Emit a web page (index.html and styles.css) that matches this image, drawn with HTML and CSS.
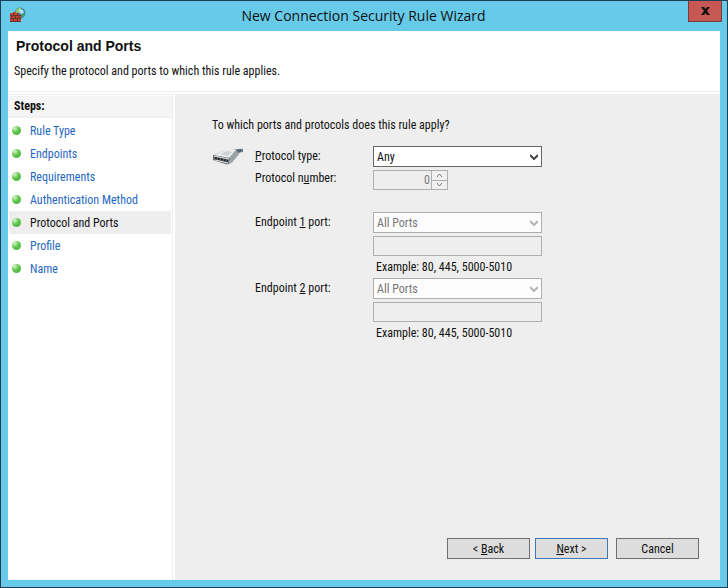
FILE: index.html
```html
<!DOCTYPE html>
<html lang="en">
<head>
<meta charset="utf-8">
<title>New Connection Security Rule Wizard</title>
<link rel="stylesheet" href="styles.css">
</head>
<body>
<div class="window">
  <div class="titlebar">
    <svg class="app-icon" viewBox="0 0 16 16" aria-hidden="true">
      <circle cx="10" cy="6" r="5.500" fill="#3f86b8"/>
      <path d="M6 3Q8 0 11 1L12 3 9 5 8 7 5 6Z" fill="#8cc66b"/>
      <path d="M9 2l4 1 1 3-3 1-2-2z" fill="#b5e2f2"/>
      <path d="M12 7l3-1-1 3-2 2z" fill="#4e9c58"/>
      <path d="M0 6h3v-1h3v1h3v2h2v7H0z" fill="#c3452f"/>
      <path d="M0 8.500h11M0 11.500h11M0 14.500h11M3.500 6v2M7.500 6v2M2 9v2M5.500 9v2M9 9v2M3.500 12v2M7.500 12v2" stroke="#6b352b" fill="none"/>
    </svg>
    <h1 class="title">New Connection Security Rule Wizard</h1>
    <button class="close" type="button" aria-label="Close">
      <svg viewBox="0 0 9 8" aria-hidden="true"><path d="M0 0h3l1.500 2L6 0h3L6 4l3 4H6L4.500 6 3 8H0l3-4z" fill="#111"/></svg>
    </button>
  </div>
  <div class="client">
    <header class="header">
      <h2>Protocol and Ports</h2>
      <p>Specify the protocol and ports to which this rule applies.</p>
    </header>
    <div class="body">
      <nav class="sidebar">
        <h3>Steps:</h3>
        <ul class="steps">
          <li><a href="#">Rule Type</a></li>
          <li><a href="#">Endpoints</a></li>
          <li><a href="#">Requirements</a></li>
          <li><a href="#">Authentication Method</a></li>
          <li class="current"><a href="#">Protocol and Ports</a></li>
          <li><a href="#">Profile</a></li>
          <li><a href="#">Name</a></li>
        </ul>
      </nav>
      <main class="page">
        <p class="question">To which ports and protocols does this rule apply?</p>
        <div class="form">
          <svg class="plug" viewBox="0 0 32 20" aria-hidden="true">
            <path d="M18 6Q24 2 31 3V6Q27 6 23 10z" fill="#71808a"/>
            <path d="M22 5l8-1M24 7l5-2" stroke="#4b5860" fill="none"/>
            <path d="M1 9L14 4 24 4 27 8 20 17 15 19 1 14z" fill="#b4babd"/>
            <path d="M2 9L14 4 24 4 17 12z" fill="#eceeef"/>
            <path d="M8 8l8-3 5 1-6 4z" fill="#cdd2d4"/>
            <path d="M17 12l7-8 3 4-8 9z" fill="#9ba2a6"/>
            <path d="M1 9l17 3-1 6-3 0-13-4z" fill="#6b7073"/>
            <path d="M2 10l15 3M3 14l13 3" stroke="#e2e3e3" fill="none"/>
            <path d="M3 12l13 3" stroke="#222527" stroke-width="2" stroke-dasharray="2 1" fill="none"/>
          </svg>
          <label for="type"><u>P</u>rotocol type:</label>
          <div class="combo">
            <select id="type"><option>Any</option></select>
            <svg viewBox="0 0 8 6" aria-hidden="true"><path d="M0 1l4 4 4-4"/></svg>
          </div>
          <label class="tight" for="number">Protocol n<u>u</u>mber:</label>
          <div class="spinner">
            <input id="number" type="text" value="0" disabled>
            <div class="arrows">
              <button type="button" disabled aria-label="Increase"><svg viewBox="0 0 7 4"><path d="M1 4l2.500-3L6 4"/></svg></button>
              <button type="button" disabled aria-label="Decrease"><svg viewBox="0 0 7 4"><path d="M1 0l2.500 3L6 0"/></svg></button>
            </div>
          </div>
          <label class="group" for="port1">Endpoint <u>1</u> port:</label>
          <div class="combo group">
            <select id="port1" disabled><option>All Ports</option></select>
            <svg viewBox="0 0 8 6" aria-hidden="true"><path d="M0 1l4 4 4-4"/></svg>
          </div>
          <input class="ports" type="text" disabled aria-label="Endpoint 1 specific ports">
          <p class="example">Example: 80, 445, 5000-5010</p>
          <label for="port2">Endpoint <u>2</u> port:</label>
          <div class="combo">
            <select id="port2" disabled><option>All Ports</option></select>
            <svg viewBox="0 0 8 6" aria-hidden="true"><path d="M0 1l4 4 4-4"/></svg>
          </div>
          <input class="ports" type="text" disabled aria-label="Endpoint 2 specific ports">
          <p class="example">Example: 80, 445, 5000-5010</p>
        </div>
        <footer class="actions">
          <button class="wide" type="button">&lt; <u>B</u>ack</button>
          <button class="default" type="button"><u>N</u>ext &gt;</button>
          <button class="wide cancel" type="button">Cancel</button>
        </footer>
      </main>
    </div>
  </div>
</div>
</body>
</html>
```
FILE: styles.css
```css
* { box-sizing: border-box; }
body, h1, h2, h3, p, ul { margin: 0; padding: 0; }
body, button, input, select {
  font-family: "Roboto Condensed", Lato, "Liberation Sans", sans-serif;
  font-size: 12px;
  line-height: 16px;
  color: #111;
}
.window {
  display: flex;
  flex-direction: column;
  min-height: 100vh;
  padding: 0 7px 7px;
  border: 1px solid #1d4057;
  background: #66cae8;
}
.titlebar {
  display: grid;
  grid-template-columns: 34px 1fr 34px;
  height: 30px;
  margin-right: -2px;
}
.app-icon { width: 16px; height: 16px; margin: 6px 2px; }
.title {
  padding-right: 3px;
  font-family: "Open Sans", "Noto Sans", sans-serif;
  font-size: 14px;
  font-weight: 400;
  line-height: 29px;
  text-align: center;
}
.close {
  height: 21px;
  padding: 0;
  border: 1px solid #713f40;
  border-top: 0;
  background: #c75753;
}
.close svg { display: block; width: 9px; height: 8px; margin: 0 auto; }
.client { display: flex; flex: 1; flex-direction: column; background: #fff; }
.header { height: 61px; padding: 6px; border-bottom: 1px solid #eee; }
.header h2 {
  padding-left: 2px;
  font-family: "Liberation Sans", Arial, sans-serif;
  font-size: 14px;
  line-height: 18px;
}
.header p { margin-top: 8px; }
.body { display: flex; flex: 1; gap: 2px; padding-top: 2px; }
.sidebar { width: 165px; border: 1px solid #eee; border-width: 1px 1px 0 0; }
.sidebar h3 {
  margin-top: 1px;
  padding: 2px 6px;
  border-bottom: 2px solid #f0f0f0;
  background: #f5f5f5;
  font-size: 12px;
}
.steps { padding: 1px; list-style: none; }
.steps li { display: flex; align-items: center; gap: 9px; height: 23px; padding-left: 3px; }
.steps li::before {
  width: 9px;
  height: 9px;
  border-radius: 50%;
  background: radial-gradient(circle at 30% 25%, #d9f5d0 0, #5fc64b 45%, #44ac36 100%);
  content: "";
}
.steps a { color: #1f67bf; text-decoration: none; }
.steps .current { background: #eee; }
.steps .current a { color: #111; }
.page {
  display: flex;
  flex: 1;
  flex-direction: column;
  padding: 23px 21px 21px 37px;
  background: #eee;
}
.form {
  display: grid;
  grid-template-columns: 32px 107px 169px;
  column-gap: 11px;
  row-gap: 3px;
  margin-top: 13px;
}
.form label { grid-column: 2; padding-top: 2px; }
.form .tight { padding-top: 0; }
.form .combo, .form .spinner, .form .ports, .form .example { grid-column: 3; }
.form .group { margin-top: 19px; }
.plug { width: 32px; height: 20px; }
.combo { position: relative; height: 21px; }
.combo select {
  width: 100%;
  height: 21px;
  padding: 0 3px;
  border: 1px solid #666;
  border-radius: 0;
  background: #fff;
  appearance: none;
}
.combo svg { position: absolute; top: 8px; right: 4px; width: 8px; height: 6px; pointer-events: none; }
.combo path { fill: none; stroke: #444; stroke-width: 2; }
.combo select:disabled { border-color: #acb0ac; background: #fcfcfc; color: #777; opacity: 1; }
.combo select:disabled + svg path { stroke: #b4b4b4; }
.spinner { display: flex; width: 75px; height: 20px; border: 1px solid #acb0ac; }
.spinner input {
  flex: 1;
  min-width: 0;
  padding: 0 1px;
  border: 0;
  background: #eee;
  color: #777;
  text-align: right;
}
.arrows { display: grid; width: 16px; border-left: 1px solid #acb0ac; }
.arrows button { padding: 0; border: 0; background: #f0f0f0; line-height: 0; }
.arrows button + button { border-top: 1px solid #acb0ac; }
.arrows svg { display: block; width: 7px; height: 4px; margin: 0 auto; }
.arrows path { fill: none; stroke: #777; }
.ports { width: 100%; height: 20px; border: 1px solid #acb0ac; background: #eee; }
.example { padding-left: 3px; }
.actions { display: flex; justify-content: flex-end; gap: 5px; margin-top: auto; }
.actions button { width: 73px; height: 21px; padding: 0; border: 1px solid #707070; background: #ddd; }
.actions .wide { width: 83px; }
.actions .default { border-color: #3d7ab5; }
.actions .cancel { margin-left: 3px; }
```
